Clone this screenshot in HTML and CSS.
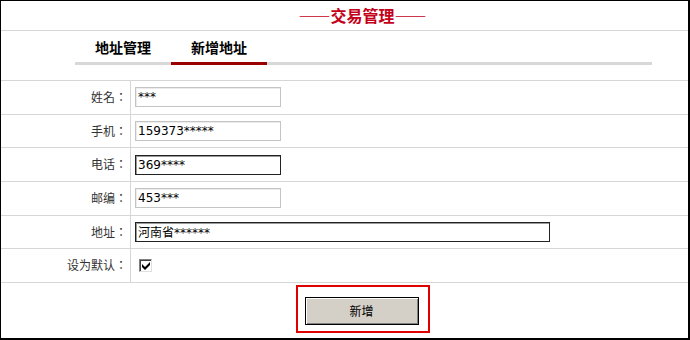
FILE: index.html
```html
<!DOCTYPE html>
<html lang="zh-CN">
<head>
    <meta charset="UTF-8">
    <meta name="viewport" content="width=device-width, initial-scale=1.0">
    <title>交易管理</title>
    <link rel="stylesheet" href="styles.css">
</head>
<body>
    <div class="page">
        <!-- Title -->
        <div class="title">——交易管理——</div>

        <!-- Tabs -->
        <div class="tabs-wrap">
            <div class="tabs">
                <a class="tab" href="#">地址管理</a>
                <a class="tab active" href="#">新增地址</a>
            </div>
        </div>

        <!-- Address form -->
        <form class="addr-form" action="#" method="post">
            <div class="row">
                <label class="label">姓名：</label>
                <div class="field"><input type="text" class="textbox" value="***"></div>
            </div>
            <div class="row">
                <label class="label">手机：</label>
                <div class="field"><input type="text" class="textbox" value="159373*****"></div>
            </div>
            <div class="row">
                <label class="label">电话：</label>
                <div class="field"><input type="text" class="textbox dark" value="369****"></div>
            </div>
            <div class="row">
                <label class="label">邮编：</label>
                <div class="field"><input type="text" class="textbox" value="453***"></div>
            </div>
            <div class="row">
                <label class="label">地址：</label>
                <div class="field"><input type="text" class="textbox dark wide" value="河南省******"></div>
            </div>
            <div class="row">
                <label class="label">设为默认：</label>
                <div class="field">
                    <span class="checkbox">
                        <svg width="8" height="8" viewBox="0 0 8 8"><path d="M0 2 L3 5 L8 0 L8 3 L3 8 L0 5 Z" fill="#000"/></svg>
                    </span>
                </div>
            </div>

            <!-- Submit -->
            <div class="actions">
                <div class="highlight">
                    <button type="submit" class="button">新增</button>
                </div>
            </div>
        </form>
    </div>
</body>
</html>
```

FILE: styles.css
```css
body {
    margin: 0;
    font-family: "Noto Sans CJK SC", sans-serif;
    font-size: 12px;
    color: #333;
    background: #fff;
}
.page {
    width: 690px;
    height: 340px;
    box-sizing: border-box;
    border-style: solid;
    border-color: #000;
    border-width: 1px 2px 2px 1px;
    overflow: hidden;
}
.title {
    height: 29px;
    line-height: 29px;
    border-bottom: 1px solid #d6d6d6;
    padding-left: 36px;
    text-align: center;
    color: #c4001a;
    font-size: 16px;
    font-weight: bold;
}
.tabs-wrap {
    height: 49px;
    border-bottom: 1px solid #d6d6d6;
}
.tabs {
    display: flex;
    margin-left: 74px;
    width: 577px;
    border-bottom: 3px solid #d8d8d8;
}
.tab {
    width: 96px;
    padding: 6px 0 5px;
    line-height: 20px;
    text-align: center;
    color: #000;
    font-size: 14px;
    font-weight: bold;
    text-decoration: none;
}
.tab.active {
    border-bottom: 3px solid #9a0000;
    margin-bottom: -3px;
}
.row {
    display: flex;
    height: 32.67px;
    border-bottom: 1px solid #d6d6d6;
}
.label {
    width: 130px;
    box-sizing: border-box;
    padding-right: 3px;
    border-right: 1px solid #d6d6d6;
    text-align: right;
    line-height: 32px;
    font-family: "Noto Sans CJK JP", sans-serif;
    font-feature-settings: "locl" 0;
    color: #333;
}
.field {
    display: flex;
    align-items: center;
    padding-left: 4px;
}
.textbox {
    width: 146px;
    height: 20px;
    box-sizing: border-box;
    margin: 0;
    padding: 0 2px;
    border: 1px solid #c4c4c4;
    box-shadow: inset 1px 1px #ececec;
    font-family: "DejaVu Sans", "Noto Sans CJK SC", sans-serif;
    font-size: 12px;
    color: #000;
    outline: none;
}
.textbox.dark {
    border-color: #222;
    box-shadow: inset 1px 1px #999;
}
.textbox.wide {
    width: 415px;
}
.checkbox {
    display: flex;
    align-items: center;
    justify-content: center;
    width: 13px;
    height: 13px;
    box-sizing: border-box;
    margin-left: 4px;
    border: 1px solid;
    border-color: #808080 #e0e0e0 #e0e0e0 #808080;
    box-shadow: inset 1px 1px #404040;
    background: #fff;
}
.actions {
    display: flex;
    justify-content: center;
    padding: 2px 0 0 36px;
}
.highlight {
    border: 2px solid #e00000;
    padding: 10px 9px 6px 7px;
}
.button {
    display: block;
    width: 114px;
    height: 28px;
    margin: 0;
    padding: 0;
    border: 1px solid #000;
    box-shadow: inset 1px 1px #fff, inset -1px -1px #808080;
    background-color: #d4d0c8;
    font-family: "Noto Sans CJK SC", sans-serif;
    font-size: 12px;
    color: #000;
    cursor: pointer;
}
```
